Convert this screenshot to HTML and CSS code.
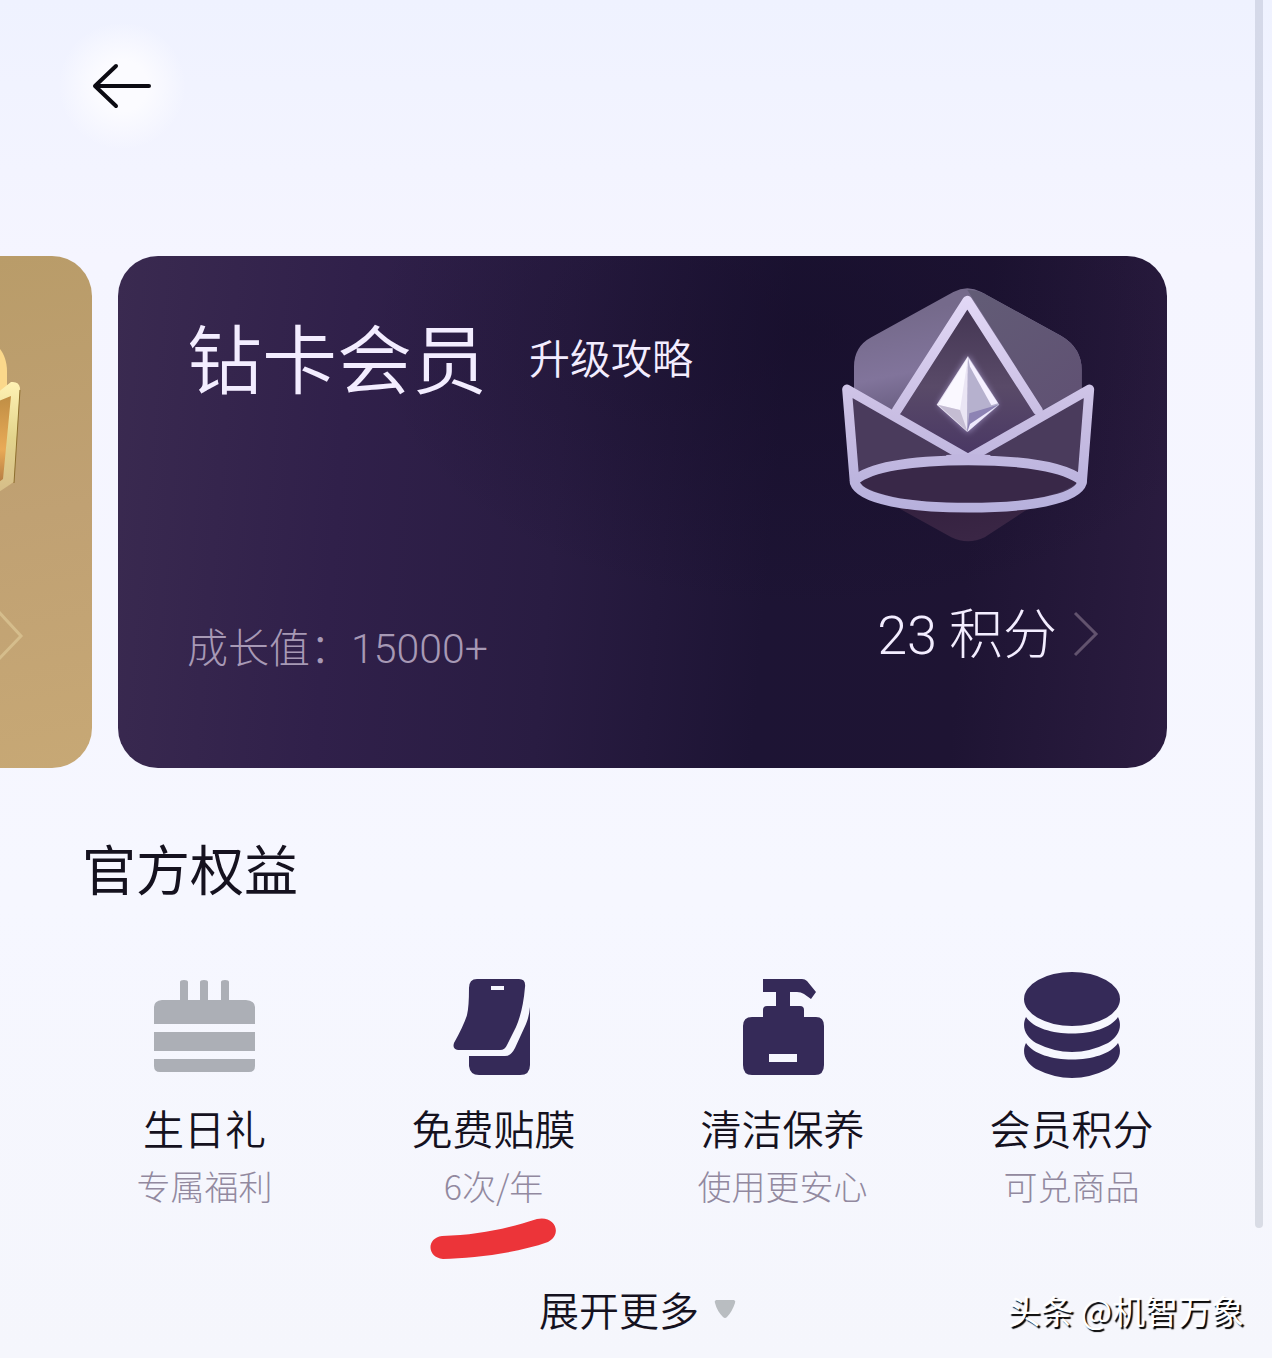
FILE: index.html
```html
<!DOCTYPE html>
<html lang="zh-CN">
<head>
<meta charset="utf-8">
<meta name="viewport" content="width=device-width, initial-scale=1">
<title>会员中心</title>
<link rel="stylesheet" href="styles.css">
</head>
<body>
<div class="page">
  <header class="topbar">
    <button class="back" type="button" aria-label="返回">
      <svg width="60" height="46" viewBox="0 0 60 46" fill="none" stroke="#0b0a12" stroke-width="4" stroke-linecap="round" stroke-linejoin="round"><path d="M24 3 3 23l21 20M4 23h53"/></svg>
    </button>
  </header>

  <main>
    <section class="cards" aria-label="会员卡">
      <div class="card card-gold">
        <svg class="gold-art" width="92" height="512" viewBox="0 0 92 512" fill="none">
          <defs>
            <linearGradient id="goldEdge" x1="0" y1="0" x2="0" y2="1"><stop offset="0" stop-color="#fff2b4"/><stop offset=".5" stop-color="#e3d48c"/><stop offset="1" stop-color="#d5bc88"/></linearGradient>
            <linearGradient id="goldFill" x1="0" y1="0" x2="0" y2="1"><stop offset="0" stop-color="#b98a42"/><stop offset=".6" stop-color="#e9aa57"/><stop offset="1" stop-color="#a9733f"/></linearGradient>
          </defs>
          <path d="M0 93c4 5 7 13 7 22v23l-7 4z" fill="#fbd88b"/>
          <path d="M0 142 20 132 14 226 0 234z" fill="url(#goldFill)"/>
          <path d="m-4 138 15-12q8-1 9 6l-6 94-18 12v-10l7-5 8-83-15 6z" transform="translate(0 0)" fill="url(#goldEdge)"/>
          <path d="m20 134-6 93" stroke="#8d6f2e" stroke-width="1"/>
          <path d="m-2 355 23 25-23 24" stroke="#d5bd8c" stroke-width="3"/>
        </svg>
      </div>
      <article class="card card-diamond">
        <div class="card-info">
          <div class="card-heading">
            <h1 class="tier">钻卡会员</h1>
            <a class="guide" href="#guide">升级攻略</a>
          </div>
          <p class="growth">成长值：<span class="digits">15000+</span></p>
        </div>
        <div class="card-side">
          <svg class="crown" width="300" height="290" viewBox="0 0 900 870" fill="none" aria-hidden="true">
            <defs>
              <linearGradient id="hex" x1="300" y1="120" x2="440" y2="810" gradientUnits="userSpaceOnUse"><stop offset="0" stop-color="#756a8b"/><stop offset=".25" stop-color="#81749b"/><stop offset=".5" stop-color="#5c5273"/><stop offset=".8" stop-color="#34213f"/><stop offset="1" stop-color="#3a2645"/></linearGradient>
              <linearGradient id="hexRight" x1="450" y1="60" x2="750" y2="420" gradientUnits="userSpaceOnUse"><stop offset="0" stop-color="#625c76"/><stop offset="1" stop-color="#605173"/></linearGradient>
              <linearGradient id="band" x1="0" y1="80" x2="0" y2="730" gradientUnits="userSpaceOnUse"><stop offset="0" stop-color="#e2d8f6"/><stop offset=".55" stop-color="#c9bee3"/><stop offset="1" stop-color="#b6b0dc"/></linearGradient>
              <linearGradient id="panel" x1="0" y1="100" x2="0" y2="600" gradientUnits="userSpaceOnUse"><stop offset="0" stop-color="#433552"/><stop offset=".5" stop-color="#594a68"/><stop offset="1" stop-color="#463363"/></linearGradient>
              <filter id="glow" x="-30%" y="-30%" width="160%" height="160%"><feGaussianBlur stdDeviation="9"/></filter>
            </defs>
            <path d="M400 66q42-22 84 0l240 132q61 36 61 102v290q0 20-20 34L494 802q-50 24-100 0L120 650q-18-10-18-34V290q0-60 52-88z" fill="url(#hex)"/>
            <path d="M442 60q24-2 48 10l234 128q61 36 61 102v60l-118 56z" fill="url(#hexRight)"/>
            <path d="M82 358 440 566 808 358 784 610Q760 715 445 715 130 710 104 630z" fill="#4a3b5c"/>
            <path d="M442 100 654 430 444 560 234 430z" fill="url(#panel)"/>
            <path d="M116 640Q210 580 445 580t328 58Q690 700 445 700T116 640z" fill="#392848"/>
            <g stroke="url(#band)" stroke-width="29" stroke-linejoin="round" stroke-linecap="round">
              <path d="M230 422 442 92 654 422"/>
              <path d="M81 358 444 566 808 358 786 638C770 690 620 713 445 713S122 690 104 638z"/>
              <path d="M104 632C150 590 280 571 445 571s290 20 341 61"/>
            </g>
            <path d="M378 555 444 551 512 555 500 578H390z" fill="#c0b6df"/>
            <path d="M444 256 534 404 444 488 354 404z" fill="#c7b9f0" opacity=".6" filter="url(#glow)"/>
            <path d="M444 258 350 404l92 82z" fill="#eae5f4"/>
            <path d="M444 258 538 404l-96 82z" fill="#b6b1ce"/>
            <path d="M444 262 420 420l-66-16z" fill="#faf8ff"/>
            <path d="m354 404 66 16 22 64z" fill="#c5bdd3"/>
            <path d="m444 262 90 138-20 6-64-116z" fill="#f5f0ff"/>
            <path d="m534 404-86 26-6 54z" fill="#8d83b4"/>
            <path d="m534 406-92 80 8-24z" fill="#eee9fc"/>
          </svg>
          <a class="points" href="#points">
            <span><span class="digits">23</span> 积分</span>
            <svg width="26" height="46" viewBox="0 0 26 46" fill="none" stroke="#62536e" stroke-width="3" aria-hidden="true"><path d="m2 2 21 21L2 44"/></svg>
          </a>
        </div>
      </article>
    </section>

    <section class="benefits">
      <h2 class="section-title">官方权益</h2>
      <ul class="benefit-list">
        <li><a class="benefit" href="#birthday">
          <svg class="icon" width="108" height="108" viewBox="0 0 108 108" fill="#acafb6"><path d="M29 30V10q0-2 4-2t4 2v20zM49 30V10q0-2 4-2t4 2v20zM70 30V10q0-2 4-2t4 2v20zM3 52V35q0-6 8-7h84q9 1 9 7v17zM3 60h101v19H3zM3 87h101v7q0 6-6 6H9q-6 0-6-6z"/></svg>
          <span class="name">生日礼</span><span class="note">专属福利</span></a></li>
        <li><a class="benefit" href="#film">
          <svg class="icon" width="108" height="108" viewBox="0 0 108 108" fill="#352a58"><path fill-rule="evenodd" d="M37 7h42q7 0 6 8-2 24-9 40L67 73q-2 5-7 5H18q-6-1-4-7 10-18 13-28 2-8 2-27 0-9 8-9zM51 14v4h13v-4z"/><path d="M90 35v58q0 10-10 10H39q-9 0-10-9V84h36q6 0 10-8l11-24q3-7 4-17z"/></svg>
          <span class="name">免费贴膜</span><span class="note">6次/年</span>
          <svg class="mark" width="126" height="42" viewBox="0 0 126 42" fill="#ec3439"><path d="M12 18C48 17 76 11 107 1c18-4 26 15 11 23C84 36 42 40 13 41-3 40-4 20 12 18z"/></svg></a></li>
        <li><a class="benefit" href="#care">
          <svg class="icon" width="108" height="108" viewBox="0 0 108 108" fill="#352a58"><path fill-rule="evenodd" d="M34 7h39q3 0 5 2l9 11-5 7-7-5q-3-2-7-2h-7v14h10q4 0 4 4v7h12q8 0 8 9v39q0 10-9 10H23q-9 0-9-10V54q0-9 9-9h11v-7q0-4 4-4h9V20H34zM40 82v8h28v-8z"/></svg>
          <span class="name">清洁保养</span><span class="note">使用更安心</span></a></li>
        <li><a class="benefit" href="#member-points">
          <svg class="icon" width="108" height="108" viewBox="0 0 108 108" fill="#352a58"><ellipse cx="54" cy="27" rx="48" ry="27"/><path d="M8 45c14 22 78 22 92 0 5 10 0 20-10 26q-36 18-72 0C8 65 3 55 8 45zM8 71c14 22 78 22 92 0 5 10 0 20-10 26q-36 18-72 0C8 91 3 81 8 71z"/></svg>
          <span class="name">会员积分</span><span class="note">可兑商品</span></a></li>
      </ul>
      <button class="more" type="button">展开更多
        <svg width="24" height="20" viewBox="0 0 24 20" fill="#b9bdc1" aria-hidden="true"><path d="M3 1h18q2 1 1 3-3 9-8 14-2 2-4 0Q4 12 2 4q-1-2 1-3z"/></svg>
      </button>
    </section>
  </main>
  <span class="scrollbar"></span>
  <span class="credit">头条 @机智万象</span>
</div>
</body>
</html>
```
FILE: styles.css
```css
* { box-sizing: border-box; }
body {
  margin: 0;
  background: #f5f6fc;
  color: #15121f;
  font-family: "Noto Sans CJK SC", sans-serif;
  font-weight: 300;
}
h1, h2, p, ul { margin: 0; padding: 0; font-weight: inherit; }
ul { list-style: none; }
a { color: inherit; text-decoration: none; }
button { border: 0; padding: 0; background: none; color: inherit; font: inherit; cursor: pointer; }
svg { display: block; }
.digits { font-family: Roboto, "Noto Sans CJK SC", sans-serif; }

.page {
  position: relative;
  min-height: 100vh;
  overflow: hidden;
  background: linear-gradient(#eff2ff 0, #f5f5ff 256px, #f6f7ff 900px, #f5f6fc 100%);
}
.topbar { height: 256px; padding: 22px 58px; }
.back {
  display: grid;
  place-items: center;
  width: 128px;
  height: 128px;
  border-radius: 50%;
  background: radial-gradient(closest-side, #fbfbff 40%, rgba(251, 251, 255, 0));
}

.cards { display: flex; gap: 26px; padding-right: 105px; }
.card { height: 512px; overflow: hidden; }
.card-gold {
  flex: none;
  width: 92px;
  border-radius: 0 40px 40px 0;
  background: linear-gradient(170deg, #b99c69, #c0a173 50%, #c7a875);
}
.card-diamond {
  flex: 1;
  display: flex;
  justify-content: space-between;
  border-radius: 40px;
  color: #f3edff;
  background:
    radial-gradient(ellipse at 66% 15%, rgba(20, 12, 40, .5), rgba(20, 12, 40, 0) 45%),
    linear-gradient(95deg, #3a2a50 0, #30204a 22%, #291c42 42%, #1d1434 62%, #1e1433 80%, #2b1c40 100%);
}
.card-info, .card-side { display: flex; flex-direction: column; justify-content: space-between; }
.card-info { padding: 52px 0 83px 69px; }
.card-heading { display: flex; align-items: center; gap: 42px; }
.tier { font-size: 75px; line-height: 96px; font-weight: 350; }
.guide { font-size: 41px; line-height: 64px; font-weight: 350; }
.growth { font-size: 41px; line-height: 72px; color: #a799b5; }
.card-side { align-items: flex-end; padding: 14px 47px 96px 0; }
.points {
  display: flex;
  align-items: center;
  gap: 16px;
  margin-right: 21px;
  font-size: 54px;
  line-height: 72px;
}

.benefits { padding: 62px 56px 14px 60px; }
.section-title { padding-left: 22px; font-size: 54px; line-height: 76px; font-weight: 400; }
.benefit-list { display: grid; grid-template-columns: repeat(4, 1fr); margin-top: 66px; }
.benefit { position: relative; display: flex; flex-direction: column; align-items: center; }
.name { margin-top: 17px; font-size: 41px; line-height: 60px; font-weight: 350; }
.note { margin-top: 5px; font-size: 34px; line-height: 48px; color: #92899f; }
.mark { position: absolute; top: 246px; left: 50%; margin-left: -64px; }
.more {
  display: flex;
  align-items: center;
  gap: 14px;
  margin: 67px auto 0;
  font-size: 40px;
  line-height: 64px;
  font-weight: 350;
}

.scrollbar {
  position: absolute;
  top: 0;
  right: 9px;
  width: 8px;
  height: 1228px;
  border-radius: 0 0 4px 4px;
  background: linear-gradient(#d5d9e9, #d9dce5);
}
.credit {
  position: absolute;
  right: 28px;
  bottom: 24px;
  color: #fff;
  font-size: 33px;
  line-height: 48px;
  font-weight: 400;
  text-shadow: 2px 2px 1px #000;
}
```
